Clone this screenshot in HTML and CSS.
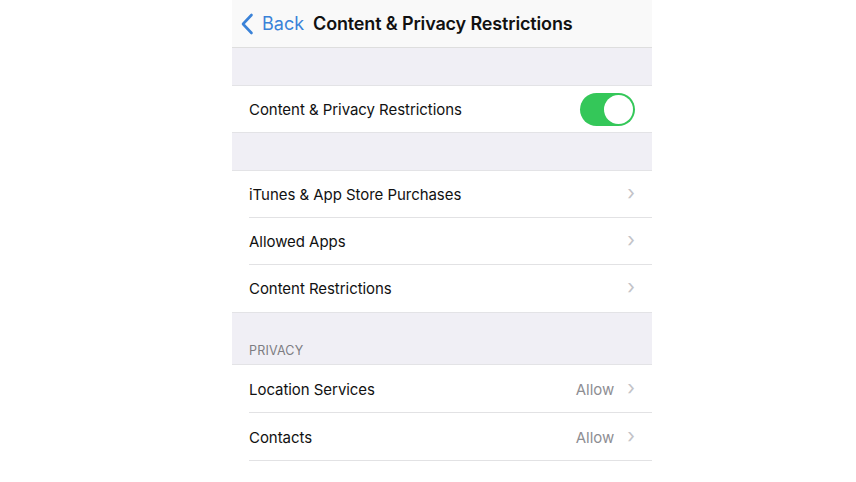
FILE: index.html
```html
<!DOCTYPE html>
<html>
<head>
<meta charset="utf-8">
<link rel="stylesheet" href="styles.css">
</head>
<body>
<div class="phone">
  <div class="nav">
    <div class="back">
      <svg class="back-icon" width="14" height="22" viewBox="0 0 14 22"><path d="M11.5 2 L3 11 L11.5 20" fill="none" stroke="#3a82d8" stroke-width="2.6" stroke-linecap="round" stroke-linejoin="round"/></svg>
      <span class="back-text">Back</span>
    </div>
    <div class="title">Content &amp; Privacy Restrictions</div>
  </div>
  <div class="gap gap1"></div>
  <div class="group">
    <div class="row row-first">
      <span class="label">Content &amp; Privacy Restrictions</span>
      <span class="toggle"><span class="knob"></span></span>
    </div>
  </div>
  <div class="gap gap2"></div>
  <div class="group">
    <div class="row sep">
      <span class="label">iTunes &amp; App Store Purchases</span>
      <span class="chev">›</span>
    </div>
    <div class="row sep">
      <span class="label">Allowed Apps</span>
      <span class="chev">›</span>
    </div>
    <div class="row">
      <span class="label">Content Restrictions</span>
      <span class="chev">›</span>
    </div>
  </div>
  <div class="gap gap3"><span class="header">PRIVACY</span></div>
  <div class="group last">
    <div class="row row-tall sep">
      <span class="label">Location Services</span>
      <span class="value">Allow</span>
      <span class="chev">›</span>
    </div>
    <div class="row row-tall sep">
      <span class="label">Contacts</span>
      <span class="value">Allow</span>
      <span class="chev">›</span>
    </div>
  </div>
</div>
</body>
</html>
```
FILE: styles.css
```css
html, body {
  margin: 0;
  padding: 0;
  background: #ffffff;
}
body {
  font-family: Inter, "Liberation Sans", Arial, sans-serif;
  color: #111111;
}
.phone {
  width: 420px;
  margin-left: 232px;
  background: #ffffff;
}
.nav {
  height: 48px;
  background: #f9f9f9;
  border-bottom: 1px solid #dedede;
  display: flex;
  align-items: center;
  box-sizing: border-box;
  padding-left: 8px;
}
.back {
  display: flex;
  align-items: center;
  gap: 8px;
  margin-right: 9px;
}
.back-icon { display: block; }
.back-text {
  font-size: 18px;
  color: #3a82d8;
}
.title {
  font-size: 18px;
  font-weight: 600;
  color: #111;
  letter-spacing: -0.15px;
}
.gap {
  background: #f0eff5;
  border-bottom: 1px solid #e3e3e6;
}
.gap1 { height: 37px; }
.gap2 { height: 37px; border-top: 1px solid #e3e3e6; }
.gap3 {
  height: 53px;
  border-top: 1px solid #e3e3e6;
  display: flex;
  align-items: flex-end;
  padding-left: 17px;
  box-sizing: border-box;
  padding-bottom: 6px;
}
.header {
  font-size: 12.5px;
  color: #7d7d82;
  letter-spacing: 0.2px;
}
.group { background: #fff; }
.row {
  height: 47px;
  display: flex;
  align-items: center;
  padding-left: 17px;
  padding-right: 17px;
  box-sizing: border-box;
  position: relative;
}
.row-first { height: 46px; }
.row-tall { height: 48px; }
.row.sep::after {
  content: "";
  position: absolute;
  left: 17px;
  right: 0;
  bottom: 0;
  height: 1px;
  background: #e2e2e4;
}
.label {
  font-size: 15px;
  flex: 1;
  letter-spacing: -0.05px;
}
.value {
  font-size: 15px;
  color: #8e8e93;
  margin-right: 13px;
}
.chev {
  font-size: 20px;
  color: #c3c3c8;
  line-height: 1;
  margin-top: -3px;
}
.toggle {
  width: 55px;
  height: 33px;
  border-radius: 17px;
  background: #34c759;
  position: relative;
  display: block;
}
.knob {
  position: absolute;
  right: 2px;
  top: 2px;
  width: 29px;
  height: 29px;
  border-radius: 50%;
  background: #fff;
}
```
